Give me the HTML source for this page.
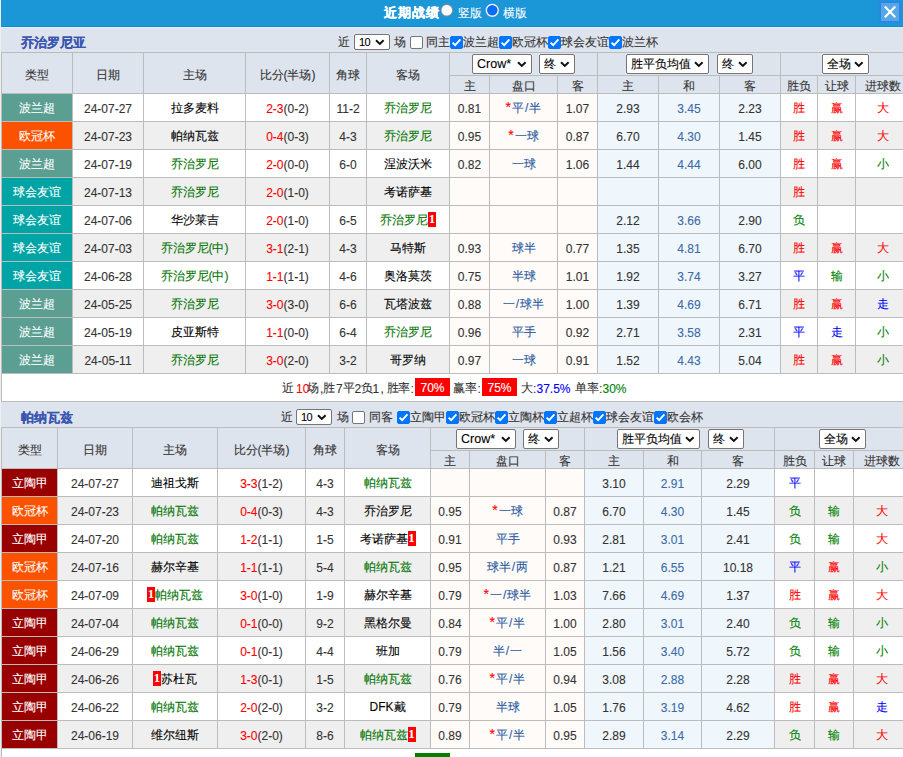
<!DOCTYPE html><html><head><meta charset="utf-8"><style>
*{margin:0;padding:0;box-sizing:border-box}
html,body{width:903px;height:757px;overflow:hidden;background:#fff}
body{position:relative;font-family:"Liberation Sans",sans-serif;font-size:12px;color:#333;-webkit-text-stroke:0.1px}
.a{position:absolute}
.c{position:absolute;display:flex;align-items:center;justify-content:center;white-space:nowrap;line-height:14px}
.h{padding-top:3px}
.n{padding-top:2px}
.hs{padding-top:3px}
.lg{color:#fff}
.tm{color:#000}
.g{color:#007400}
.hc{color:#2a5aa0}
.star{color:#f00;font-size:14px;position:relative;top:-1px;margin-right:1px}
.sl{margin:0 1px}
.dr{color:#3d6aa8}
.rc{display:inline-block;background:#f00;color:#fff;font-weight:bold;font-family:"Liberation Serif",serif;font-size:12px;width:8px;height:15px;line-height:15px;text-align:center}
.sel{position:absolute;background:#fff;border:1px solid #767676;border-radius:2px;font-size:12.5px;color:#000;display:flex;align-items:center;padding-left:4px}
.sel.zh{font-size:12px;padding-left:4px}
.sel.sm{font-size:11px;padding-left:4px;letter-spacing:-0.7px}
.sel .st{white-space:nowrap;line-height:15px}
.sel .chev{position:absolute;right:4px;top:50%;margin-top:-3px}
.cb{position:absolute;width:13px;height:13px;border:1px solid #767676;border-radius:2px;background:#fff}
.cb.on{background:#0075ff;border-color:#0075ff}
.cb svg{position:absolute;left:-1px;top:-1px}
.t{position:absolute;white-space:nowrap;line-height:14px}
.rb{position:absolute;background:#f00;color:#fff;font-size:12px;width:35px;height:18px;line-height:21px;text-align:center}
</style></head><body><div class="a" style="left:0px;top:0px;width:1px;height:757px;background:#eeeeee;"></div>
<div class="a" style="left:1px;top:0px;width:902px;height:26px;background:#1b96d6;"></div>
<div class="a" style="left:1px;top:26px;width:902px;height:1px;background:#0b8fd3;"></div>
<div class="a" style="left:1px;top:27px;width:902px;height:1px;background:#e9ebef;"></div>
<div class="a" style="left:1px;top:28px;width:902px;height:24px;background:#dee4ed;"></div>
<div class="t" style="left:384px;top:6px;font-size:13px;letter-spacing:1px;font-weight:bold;color:#fff;line-height:14px;-webkit-text-stroke:0.3px #fff">近期战绩</div>
<svg class="a" style="left:440px;top:4px" width="14" height="14" viewBox="0 0 14 14"><circle cx="6.8" cy="6.3" r="5.8" fill="#fff" stroke="#8a8a8a" stroke-width="1"/></svg>
<div class="t" style="left:458px;top:6px;color:#fff;line-height:14px">竖版</div>
<svg class="a" style="left:485px;top:3px" width="15" height="15" viewBox="0 0 15 15"><circle cx="7.3" cy="7.3" r="6.1" fill="#0a6cf5" stroke="#fff" stroke-width="1.6"/><circle cx="7.3" cy="7.3" r="6.9" fill="none" stroke="#1a80e0" stroke-width="0.6"/></svg>
<div class="t" style="left:503px;top:6px;color:#fff;line-height:14px">横版</div>
<div class="a" style="left:879px;top:1px;width:22px;height:22px;background:#2a88e2"></div>
<div class="a" style="left:881px;top:3px;width:18px;height:18px;background:#57a6ea"></div>
<svg class="a" style="left:879px;top:1px" width="22" height="22" viewBox="0 0 22 22"><path d="M5.8 5.6 L16.3 16.3 M16.3 5.6 L5.8 16.3" stroke="#fff" stroke-width="2.1"/></svg>
<div class="t" style="left:21px;top:36px;font-size:13px;font-weight:bold;color:#3a55b0;line-height:14px">乔治罗尼亚</div>
<div class="t" style="left:337.5px;top:35px">近</div>
<div class="sel sm" style="left:354px;top:34px;width:36px;height:16px"><span class="st">10</span><svg class="chev" width="10" height="7" viewBox="0 0 10 7"><path d="M1 1.3 L4.8 4.9 L8.6 1.3" fill="none" stroke="#111" stroke-width="2"/></svg></div>
<div class="t" style="left:393.5px;top:35px">场</div>
<div class="cb" style="left:410px;top:36px"></div>
<div class="t" style="left:426px;top:35px">同主</div>
<div class="cb on" style="left:450px;top:36px"><svg width="13" height="13" viewBox="0 0 13 13"><path d="M2.6 6.6 L5.2 9.2 L10.4 3.4" fill="none" stroke="#fff" stroke-width="1.9"/></svg></div>
<div class="t" style="left:463px;top:35px">波兰超</div>
<div class="cb on" style="left:499px;top:36px"><svg width="13" height="13" viewBox="0 0 13 13"><path d="M2.6 6.6 L5.2 9.2 L10.4 3.4" fill="none" stroke="#fff" stroke-width="1.9"/></svg></div>
<div class="t" style="left:512px;top:35px">欧冠杯</div>
<div class="cb on" style="left:548px;top:36px"><svg width="13" height="13" viewBox="0 0 13 13"><path d="M2.6 6.6 L5.2 9.2 L10.4 3.4" fill="none" stroke="#fff" stroke-width="1.9"/></svg></div>
<div class="t" style="left:561px;top:35px">球会友谊</div>
<div class="cb on" style="left:609px;top:36px"><svg width="13" height="13" viewBox="0 0 13 13"><path d="M2.6 6.6 L5.2 9.2 L10.4 3.4" fill="none" stroke="#fff" stroke-width="1.9"/></svg></div>
<div class="t" style="left:622px;top:35px">波兰杯</div>
<div class="a" style="left:1px;top:52px;width:909px;height:322px;background:#bcbcbc;"></div>
<div class="c h" style="left:2px;top:53px;width:70px;height:40px;background:#dee4ed;">类型</div>
<div class="c h" style="left:73px;top:53px;width:70px;height:40px;background:#dee4ed;">日期</div>
<div class="c h" style="left:144px;top:53px;width:101px;height:40px;background:#dee4ed;">主场</div>
<div class="c h" style="left:246px;top:53px;width:83px;height:40px;background:#dee4ed;">比分(半场)</div>
<div class="c h" style="left:330px;top:53px;width:36px;height:40px;background:#dee4ed;">角球</div>
<div class="c h" style="left:367px;top:53px;width:82px;height:40px;background:#dee4ed;">客场</div>
<div class="c" style="left:450px;top:53px;width:147px;height:22px;background:#dee4ed;"></div>
<div class="c" style="left:598px;top:53px;width:182px;height:22px;background:#dee4ed;"></div>
<div class="c" style="left:781px;top:53px;width:128px;height:22px;background:#dee4ed;"></div>
<div class="c hs" style="left:450px;top:76px;width:39px;height:17px;background:#dee4ed;">主</div>
<div class="c hs" style="left:490px;top:76px;width:67px;height:17px;background:#dee4ed;">盘口</div>
<div class="c hs" style="left:558px;top:76px;width:39px;height:17px;background:#dee4ed;">客</div>
<div class="c hs" style="left:598px;top:76px;width:60px;height:17px;background:#dee4ed;">主</div>
<div class="c hs" style="left:659px;top:76px;width:60px;height:17px;background:#dee4ed;">和</div>
<div class="c hs" style="left:720px;top:76px;width:60px;height:17px;background:#dee4ed;">客</div>
<div class="c hs" style="left:781px;top:76px;width:36px;height:17px;background:#dee4ed;">胜负</div>
<div class="c hs" style="left:818px;top:76px;width:37px;height:17px;background:#dee4ed;">让球</div>
<div class="c hs" style="left:856px;top:76px;width:53px;height:17px;background:#dee4ed;">进球数</div>
<div class="sel" style="left:472px;top:54px;width:60px;height:20px"><span class="st">Crow*</span><svg class="chev" width="10" height="7" viewBox="0 0 10 7"><path d="M1 1.3 L4.8 4.9 L8.6 1.3" fill="none" stroke="#111" stroke-width="2"/></svg></div>
<div class="sel zh" style="left:539px;top:54px;width:36px;height:20px"><span class="st">终</span><svg class="chev" width="10" height="7" viewBox="0 0 10 7"><path d="M1 1.3 L4.8 4.9 L8.6 1.3" fill="none" stroke="#111" stroke-width="2"/></svg></div>
<div class="sel zh" style="left:626px;top:54px;width:83px;height:20px"><span class="st">胜平负均值</span><svg class="chev" width="10" height="7" viewBox="0 0 10 7"><path d="M1 1.3 L4.8 4.9 L8.6 1.3" fill="none" stroke="#111" stroke-width="2"/></svg></div>
<div class="sel zh" style="left:717px;top:54px;width:36px;height:20px"><span class="st">终</span><svg class="chev" width="10" height="7" viewBox="0 0 10 7"><path d="M1 1.3 L4.8 4.9 L8.6 1.3" fill="none" stroke="#111" stroke-width="2"/></svg></div>
<div class="sel zh" style="left:822px;top:54px;width:47px;height:20px"><span class="st">全场</span><svg class="chev" width="10" height="7" viewBox="0 0 10 7"><path d="M1 1.3 L4.8 4.9 L8.6 1.3" fill="none" stroke="#111" stroke-width="2"/></svg></div>
<div class="c lg" style="left:2px;top:94px;width:70px;height:27px;background:#5b9f93;">波兰超</div>
<div class="c n" style="left:73px;top:94px;width:70px;height:27px;background:#ffffff;">24-07-27</div>
<div class="c tm" style="left:144px;top:94px;width:101px;height:27px;background:#ffffff;">拉多麦料</div>
<div class="c n" style="left:246px;top:94px;width:83px;height:27px;background:#ffffff;"><span style="color:#ff0000">2-3</span>(0-2)</div>
<div class="c n" style="left:330px;top:94px;width:36px;height:27px;background:#ffffff;">11-2</div>
<div class="c tm g" style="left:367px;top:94px;width:82px;height:27px;background:#ffffff;">乔治罗尼</div>
<div class="c n" style="left:450px;top:94px;width:39px;height:27px;background:#fffbf8;">0.81</div>
<div class="c hc" style="left:490px;top:94px;width:67px;height:27px;background:#fffbf8;"><span class="star">*</span>平<span class="sl">/</span>半</div>
<div class="c n" style="left:558px;top:94px;width:39px;height:27px;background:#fffbf8;">1.07</div>
<div class="c n" style="left:598px;top:94px;width:60px;height:27px;background:#f0f7fc;">2.93</div>
<div class="c n dr" style="left:659px;top:94px;width:60px;height:27px;background:#f0f7fc;">3.45</div>
<div class="c n" style="left:720px;top:94px;width:60px;height:27px;background:#f0f7fc;">2.23</div>
<div class="c" style="left:781px;top:94px;width:36px;height:27px;background:#ffffff;"><span style="color:#ff0000">胜</span></div>
<div class="c" style="left:818px;top:94px;width:37px;height:27px;background:#ffffff;"><span style="color:#ff0000">赢</span></div>
<div class="c" style="left:856px;top:94px;width:53px;height:27px;background:#ffffff;"><span style="color:#ff0000">大</span></div>
<div class="c lg" style="left:2px;top:122px;width:70px;height:27px;background:#fb5200;">欧冠杯</div>
<div class="c n" style="left:73px;top:122px;width:70px;height:27px;background:#efefef;">24-07-23</div>
<div class="c tm" style="left:144px;top:122px;width:101px;height:27px;background:#efefef;">帕纳瓦兹</div>
<div class="c n" style="left:246px;top:122px;width:83px;height:27px;background:#efefef;"><span style="color:#ff0000">0-4</span>(0-3)</div>
<div class="c n" style="left:330px;top:122px;width:36px;height:27px;background:#efefef;">4-3</div>
<div class="c tm g" style="left:367px;top:122px;width:82px;height:27px;background:#efefef;">乔治罗尼</div>
<div class="c n" style="left:450px;top:122px;width:39px;height:27px;background:#fffbf8;">0.95</div>
<div class="c hc" style="left:490px;top:122px;width:67px;height:27px;background:#fffbf8;"><span class="star">*</span>一球</div>
<div class="c n" style="left:558px;top:122px;width:39px;height:27px;background:#fffbf8;">0.87</div>
<div class="c n" style="left:598px;top:122px;width:60px;height:27px;background:#f0f7fc;">6.70</div>
<div class="c n dr" style="left:659px;top:122px;width:60px;height:27px;background:#f0f7fc;">4.30</div>
<div class="c n" style="left:720px;top:122px;width:60px;height:27px;background:#f0f7fc;">1.45</div>
<div class="c" style="left:781px;top:122px;width:36px;height:27px;background:#efefef;"><span style="color:#ff0000">胜</span></div>
<div class="c" style="left:818px;top:122px;width:37px;height:27px;background:#efefef;"><span style="color:#ff0000">赢</span></div>
<div class="c" style="left:856px;top:122px;width:53px;height:27px;background:#efefef;"><span style="color:#ff0000">大</span></div>
<div class="c lg" style="left:2px;top:150px;width:70px;height:27px;background:#5b9f93;">波兰超</div>
<div class="c n" style="left:73px;top:150px;width:70px;height:27px;background:#ffffff;">24-07-19</div>
<div class="c tm g" style="left:144px;top:150px;width:101px;height:27px;background:#ffffff;">乔治罗尼</div>
<div class="c n" style="left:246px;top:150px;width:83px;height:27px;background:#ffffff;"><span style="color:#ff0000">2-0</span>(0-0)</div>
<div class="c n" style="left:330px;top:150px;width:36px;height:27px;background:#ffffff;">6-0</div>
<div class="c tm" style="left:367px;top:150px;width:82px;height:27px;background:#ffffff;">涅波沃米</div>
<div class="c n" style="left:450px;top:150px;width:39px;height:27px;background:#fffbf8;">0.82</div>
<div class="c hc" style="left:490px;top:150px;width:67px;height:27px;background:#fffbf8;">一球</div>
<div class="c n" style="left:558px;top:150px;width:39px;height:27px;background:#fffbf8;">1.06</div>
<div class="c n" style="left:598px;top:150px;width:60px;height:27px;background:#f0f7fc;">1.44</div>
<div class="c n dr" style="left:659px;top:150px;width:60px;height:27px;background:#f0f7fc;">4.44</div>
<div class="c n" style="left:720px;top:150px;width:60px;height:27px;background:#f0f7fc;">6.00</div>
<div class="c" style="left:781px;top:150px;width:36px;height:27px;background:#ffffff;"><span style="color:#ff0000">胜</span></div>
<div class="c" style="left:818px;top:150px;width:37px;height:27px;background:#ffffff;"><span style="color:#ff0000">赢</span></div>
<div class="c" style="left:856px;top:150px;width:53px;height:27px;background:#ffffff;"><span style="color:#008000">小</span></div>
<div class="c lg" style="left:2px;top:178px;width:70px;height:27px;background:#00a4a4;">球会友谊</div>
<div class="c n" style="left:73px;top:178px;width:70px;height:27px;background:#efefef;">24-07-13</div>
<div class="c tm g" style="left:144px;top:178px;width:101px;height:27px;background:#efefef;">乔治罗尼</div>
<div class="c n" style="left:246px;top:178px;width:83px;height:27px;background:#efefef;"><span style="color:#ff0000">2-0</span>(1-0)</div>
<div class="c n" style="left:330px;top:178px;width:36px;height:27px;background:#efefef;"></div>
<div class="c tm" style="left:367px;top:178px;width:82px;height:27px;background:#efefef;">考诺萨基</div>
<div class="c n" style="left:450px;top:178px;width:39px;height:27px;background:#fffbf8;"></div>
<div class="c hc" style="left:490px;top:178px;width:67px;height:27px;background:#fffbf8;"></div>
<div class="c n" style="left:558px;top:178px;width:39px;height:27px;background:#fffbf8;"></div>
<div class="c n" style="left:598px;top:178px;width:60px;height:27px;background:#f0f7fc;"></div>
<div class="c n dr" style="left:659px;top:178px;width:60px;height:27px;background:#f0f7fc;"></div>
<div class="c n" style="left:720px;top:178px;width:60px;height:27px;background:#f0f7fc;"></div>
<div class="c" style="left:781px;top:178px;width:36px;height:27px;background:#efefef;"><span style="color:#ff0000">胜</span></div>
<div class="c" style="left:818px;top:178px;width:37px;height:27px;background:#efefef;"></div>
<div class="c" style="left:856px;top:178px;width:53px;height:27px;background:#efefef;"></div>
<div class="c lg" style="left:2px;top:206px;width:70px;height:27px;background:#00a4a4;">球会友谊</div>
<div class="c n" style="left:73px;top:206px;width:70px;height:27px;background:#ffffff;">24-07-06</div>
<div class="c tm" style="left:144px;top:206px;width:101px;height:27px;background:#ffffff;">华沙莱吉</div>
<div class="c n" style="left:246px;top:206px;width:83px;height:27px;background:#ffffff;"><span style="color:#ff0000">2-0</span>(1-0)</div>
<div class="c n" style="left:330px;top:206px;width:36px;height:27px;background:#ffffff;">6-5</div>
<div class="c tm g" style="left:367px;top:206px;width:82px;height:27px;background:#ffffff;">乔治罗尼<span class="rc">1</span></div>
<div class="c n" style="left:450px;top:206px;width:39px;height:27px;background:#fffbf8;"></div>
<div class="c hc" style="left:490px;top:206px;width:67px;height:27px;background:#fffbf8;"></div>
<div class="c n" style="left:558px;top:206px;width:39px;height:27px;background:#fffbf8;"></div>
<div class="c n" style="left:598px;top:206px;width:60px;height:27px;background:#f0f7fc;">2.12</div>
<div class="c n dr" style="left:659px;top:206px;width:60px;height:27px;background:#f0f7fc;">3.66</div>
<div class="c n" style="left:720px;top:206px;width:60px;height:27px;background:#f0f7fc;">2.90</div>
<div class="c" style="left:781px;top:206px;width:36px;height:27px;background:#ffffff;"><span style="color:#008000">负</span></div>
<div class="c" style="left:818px;top:206px;width:37px;height:27px;background:#ffffff;"></div>
<div class="c" style="left:856px;top:206px;width:53px;height:27px;background:#ffffff;"></div>
<div class="c lg" style="left:2px;top:234px;width:70px;height:27px;background:#00a4a4;">球会友谊</div>
<div class="c n" style="left:73px;top:234px;width:70px;height:27px;background:#efefef;">24-07-03</div>
<div class="c tm g" style="left:144px;top:234px;width:101px;height:27px;background:#efefef;">乔治罗尼(中)</div>
<div class="c n" style="left:246px;top:234px;width:83px;height:27px;background:#efefef;"><span style="color:#ff0000">3-1</span>(2-1)</div>
<div class="c n" style="left:330px;top:234px;width:36px;height:27px;background:#efefef;">4-3</div>
<div class="c tm" style="left:367px;top:234px;width:82px;height:27px;background:#efefef;">马特斯</div>
<div class="c n" style="left:450px;top:234px;width:39px;height:27px;background:#fffbf8;">0.93</div>
<div class="c hc" style="left:490px;top:234px;width:67px;height:27px;background:#fffbf8;">球半</div>
<div class="c n" style="left:558px;top:234px;width:39px;height:27px;background:#fffbf8;">0.77</div>
<div class="c n" style="left:598px;top:234px;width:60px;height:27px;background:#f0f7fc;">1.35</div>
<div class="c n dr" style="left:659px;top:234px;width:60px;height:27px;background:#f0f7fc;">4.81</div>
<div class="c n" style="left:720px;top:234px;width:60px;height:27px;background:#f0f7fc;">6.70</div>
<div class="c" style="left:781px;top:234px;width:36px;height:27px;background:#efefef;"><span style="color:#ff0000">胜</span></div>
<div class="c" style="left:818px;top:234px;width:37px;height:27px;background:#efefef;"><span style="color:#ff0000">赢</span></div>
<div class="c" style="left:856px;top:234px;width:53px;height:27px;background:#efefef;"><span style="color:#ff0000">大</span></div>
<div class="c lg" style="left:2px;top:262px;width:70px;height:27px;background:#00a4a4;">球会友谊</div>
<div class="c n" style="left:73px;top:262px;width:70px;height:27px;background:#ffffff;">24-06-28</div>
<div class="c tm g" style="left:144px;top:262px;width:101px;height:27px;background:#ffffff;">乔治罗尼(中)</div>
<div class="c n" style="left:246px;top:262px;width:83px;height:27px;background:#ffffff;"><span style="color:#ff0000">1-1</span>(1-1)</div>
<div class="c n" style="left:330px;top:262px;width:36px;height:27px;background:#ffffff;">4-6</div>
<div class="c tm" style="left:367px;top:262px;width:82px;height:27px;background:#ffffff;">奥洛莫茨</div>
<div class="c n" style="left:450px;top:262px;width:39px;height:27px;background:#fffbf8;">0.75</div>
<div class="c hc" style="left:490px;top:262px;width:67px;height:27px;background:#fffbf8;">半球</div>
<div class="c n" style="left:558px;top:262px;width:39px;height:27px;background:#fffbf8;">1.01</div>
<div class="c n" style="left:598px;top:262px;width:60px;height:27px;background:#f0f7fc;">1.92</div>
<div class="c n dr" style="left:659px;top:262px;width:60px;height:27px;background:#f0f7fc;">3.74</div>
<div class="c n" style="left:720px;top:262px;width:60px;height:27px;background:#f0f7fc;">3.27</div>
<div class="c" style="left:781px;top:262px;width:36px;height:27px;background:#ffffff;"><span style="color:#0000ff">平</span></div>
<div class="c" style="left:818px;top:262px;width:37px;height:27px;background:#ffffff;"><span style="color:#008000">输</span></div>
<div class="c" style="left:856px;top:262px;width:53px;height:27px;background:#ffffff;"><span style="color:#008000">小</span></div>
<div class="c lg" style="left:2px;top:290px;width:70px;height:27px;background:#5b9f93;">波兰超</div>
<div class="c n" style="left:73px;top:290px;width:70px;height:27px;background:#efefef;">24-05-25</div>
<div class="c tm g" style="left:144px;top:290px;width:101px;height:27px;background:#efefef;">乔治罗尼</div>
<div class="c n" style="left:246px;top:290px;width:83px;height:27px;background:#efefef;"><span style="color:#ff0000">3-0</span>(3-0)</div>
<div class="c n" style="left:330px;top:290px;width:36px;height:27px;background:#efefef;">6-6</div>
<div class="c tm" style="left:367px;top:290px;width:82px;height:27px;background:#efefef;">瓦塔波兹</div>
<div class="c n" style="left:450px;top:290px;width:39px;height:27px;background:#fffbf8;">0.88</div>
<div class="c hc" style="left:490px;top:290px;width:67px;height:27px;background:#fffbf8;">一<span class="sl">/</span>球半</div>
<div class="c n" style="left:558px;top:290px;width:39px;height:27px;background:#fffbf8;">1.00</div>
<div class="c n" style="left:598px;top:290px;width:60px;height:27px;background:#f0f7fc;">1.39</div>
<div class="c n dr" style="left:659px;top:290px;width:60px;height:27px;background:#f0f7fc;">4.69</div>
<div class="c n" style="left:720px;top:290px;width:60px;height:27px;background:#f0f7fc;">6.71</div>
<div class="c" style="left:781px;top:290px;width:36px;height:27px;background:#efefef;"><span style="color:#ff0000">胜</span></div>
<div class="c" style="left:818px;top:290px;width:37px;height:27px;background:#efefef;"><span style="color:#ff0000">赢</span></div>
<div class="c" style="left:856px;top:290px;width:53px;height:27px;background:#efefef;"><span style="color:#0000ff">走</span></div>
<div class="c lg" style="left:2px;top:318px;width:70px;height:27px;background:#5b9f93;">波兰超</div>
<div class="c n" style="left:73px;top:318px;width:70px;height:27px;background:#ffffff;">24-05-19</div>
<div class="c tm" style="left:144px;top:318px;width:101px;height:27px;background:#ffffff;">皮亚斯特</div>
<div class="c n" style="left:246px;top:318px;width:83px;height:27px;background:#ffffff;"><span style="color:#ff0000">1-1</span>(0-0)</div>
<div class="c n" style="left:330px;top:318px;width:36px;height:27px;background:#ffffff;">6-4</div>
<div class="c tm g" style="left:367px;top:318px;width:82px;height:27px;background:#ffffff;">乔治罗尼</div>
<div class="c n" style="left:450px;top:318px;width:39px;height:27px;background:#fffbf8;">0.96</div>
<div class="c hc" style="left:490px;top:318px;width:67px;height:27px;background:#fffbf8;">平手</div>
<div class="c n" style="left:558px;top:318px;width:39px;height:27px;background:#fffbf8;">0.92</div>
<div class="c n" style="left:598px;top:318px;width:60px;height:27px;background:#f0f7fc;">2.71</div>
<div class="c n dr" style="left:659px;top:318px;width:60px;height:27px;background:#f0f7fc;">3.58</div>
<div class="c n" style="left:720px;top:318px;width:60px;height:27px;background:#f0f7fc;">2.31</div>
<div class="c" style="left:781px;top:318px;width:36px;height:27px;background:#ffffff;"><span style="color:#0000ff">平</span></div>
<div class="c" style="left:818px;top:318px;width:37px;height:27px;background:#ffffff;"><span style="color:#0000ff">走</span></div>
<div class="c" style="left:856px;top:318px;width:53px;height:27px;background:#ffffff;"><span style="color:#008000">小</span></div>
<div class="c lg" style="left:2px;top:346px;width:70px;height:27px;background:#5b9f93;">波兰超</div>
<div class="c n" style="left:73px;top:346px;width:70px;height:27px;background:#efefef;">24-05-11</div>
<div class="c tm g" style="left:144px;top:346px;width:101px;height:27px;background:#efefef;">乔治罗尼</div>
<div class="c n" style="left:246px;top:346px;width:83px;height:27px;background:#efefef;"><span style="color:#ff0000">3-0</span>(2-0)</div>
<div class="c n" style="left:330px;top:346px;width:36px;height:27px;background:#efefef;">3-2</div>
<div class="c tm" style="left:367px;top:346px;width:82px;height:27px;background:#efefef;">哥罗纳</div>
<div class="c n" style="left:450px;top:346px;width:39px;height:27px;background:#fffbf8;">0.97</div>
<div class="c hc" style="left:490px;top:346px;width:67px;height:27px;background:#fffbf8;">一球</div>
<div class="c n" style="left:558px;top:346px;width:39px;height:27px;background:#fffbf8;">0.91</div>
<div class="c n" style="left:598px;top:346px;width:60px;height:27px;background:#f0f7fc;">1.52</div>
<div class="c n dr" style="left:659px;top:346px;width:60px;height:27px;background:#f0f7fc;">4.43</div>
<div class="c n" style="left:720px;top:346px;width:60px;height:27px;background:#f0f7fc;">5.04</div>
<div class="c" style="left:781px;top:346px;width:36px;height:27px;background:#efefef;"><span style="color:#ff0000">胜</span></div>
<div class="c" style="left:818px;top:346px;width:37px;height:27px;background:#efefef;"><span style="color:#ff0000">赢</span></div>
<div class="c" style="left:856px;top:346px;width:53px;height:27px;background:#efefef;"><span style="color:#008000">小</span></div>
<div class="a" style="left:1px;top:373px;width:908px;height:29px;background:#bcbcbc;"></div>
<div class="a" style="left:2px;top:374px;width:906px;height:27px;background:#fff;"></div>
<div class="t" style="left:282px;top:381px;color:#333">近</div>
<div class="t" style="left:296px;top:382px;color:#ff0000">10</div>
<div class="t" style="left:307px;top:381px;color:#333">场</div>
<div class="t" style="left:320px;top:382px;color:#333">,</div>
<div class="t" style="left:323px;top:381px;color:#333">胜</div>
<div class="t" style="left:336px;top:382px;color:#333">7</div>
<div class="t" style="left:342.5px;top:381px;color:#333">平</div>
<div class="t" style="left:354.5px;top:382px;color:#333">2</div>
<div class="t" style="left:361px;top:381px;color:#333">负</div>
<div class="t" style="left:372.5px;top:382px;color:#333">1</div>
<div class="t" style="left:380.5px;top:382px;color:#333">,</div>
<div class="t" style="left:386.5px;top:381px;color:#333">胜</div>
<div class="t" style="left:398px;top:381px;color:#333">率</div>
<div class="t" style="left:410.5px;top:382px;color:#333">:</div>
<div class="t" style="left:453px;top:381px;color:#333">赢</div>
<div class="t" style="left:465px;top:381px;color:#333">率</div>
<div class="t" style="left:477.5px;top:382px;color:#333">:</div>
<div class="t" style="left:520.5px;top:381px;color:#333">大</div>
<div class="t" style="left:533px;top:382px;color:#333">:</div>
<div class="t" style="left:536.5px;top:382px;color:#0000ff">37.5%</div>
<div class="t" style="left:574.5px;top:381px;color:#333">单</div>
<div class="t" style="left:586.5px;top:381px;color:#333">率</div>
<div class="t" style="left:599px;top:382px;color:#333">:</div>
<div class="t" style="left:602.5px;top:382px;color:#008000">30%</div>
<div class="rb" style="left:415px;top:378px">70%</div>
<div class="rb" style="left:482px;top:378px">75%</div>
<div class="a" style="left:1px;top:402px;width:902px;height:25px;background:#dee4ed;"></div>
<div class="t" style="left:21px;top:411px;font-size:13px;font-weight:bold;color:#3a55b0;line-height:14px">帕纳瓦兹</div>
<div class="t" style="left:280.5px;top:410px">近</div>
<div class="sel sm" style="left:296px;top:409px;width:36px;height:16px"><span class="st">10</span><svg class="chev" width="10" height="7" viewBox="0 0 10 7"><path d="M1 1.3 L4.8 4.9 L8.6 1.3" fill="none" stroke="#111" stroke-width="2"/></svg></div>
<div class="t" style="left:336.5px;top:410px">场</div>
<div class="cb" style="left:352px;top:411px"></div>
<div class="t" style="left:369px;top:410px">同客</div>
<div class="cb on" style="left:397px;top:411px"><svg width="13" height="13" viewBox="0 0 13 13"><path d="M2.6 6.6 L5.2 9.2 L10.4 3.4" fill="none" stroke="#fff" stroke-width="1.9"/></svg></div>
<div class="t" style="left:410px;top:410px">立陶甲</div>
<div class="cb on" style="left:446px;top:411px"><svg width="13" height="13" viewBox="0 0 13 13"><path d="M2.6 6.6 L5.2 9.2 L10.4 3.4" fill="none" stroke="#fff" stroke-width="1.9"/></svg></div>
<div class="t" style="left:459px;top:410px">欧冠杯</div>
<div class="cb on" style="left:495px;top:411px"><svg width="13" height="13" viewBox="0 0 13 13"><path d="M2.6 6.6 L5.2 9.2 L10.4 3.4" fill="none" stroke="#fff" stroke-width="1.9"/></svg></div>
<div class="t" style="left:508px;top:410px">立陶杯</div>
<div class="cb on" style="left:544px;top:411px"><svg width="13" height="13" viewBox="0 0 13 13"><path d="M2.6 6.6 L5.2 9.2 L10.4 3.4" fill="none" stroke="#fff" stroke-width="1.9"/></svg></div>
<div class="t" style="left:557px;top:410px">立超杯</div>
<div class="cb on" style="left:593px;top:411px"><svg width="13" height="13" viewBox="0 0 13 13"><path d="M2.6 6.6 L5.2 9.2 L10.4 3.4" fill="none" stroke="#fff" stroke-width="1.9"/></svg></div>
<div class="t" style="left:606px;top:410px">球会友谊</div>
<div class="cb on" style="left:654px;top:411px"><svg width="13" height="13" viewBox="0 0 13 13"><path d="M2.6 6.6 L5.2 9.2 L10.4 3.4" fill="none" stroke="#fff" stroke-width="1.9"/></svg></div>
<div class="t" style="left:667px;top:410px">欧会杯</div>
<div class="a" style="left:1px;top:427px;width:909px;height:322px;background:#bcbcbc;"></div>
<div class="c h" style="left:2px;top:428px;width:55px;height:40px;background:#dee4ed;">类型</div>
<div class="c h" style="left:58px;top:428px;width:74px;height:40px;background:#dee4ed;">日期</div>
<div class="c h" style="left:133px;top:428px;width:84px;height:40px;background:#dee4ed;">主场</div>
<div class="c h" style="left:218px;top:428px;width:87px;height:40px;background:#dee4ed;">比分(半场)</div>
<div class="c h" style="left:306px;top:428px;width:38px;height:40px;background:#dee4ed;">角球</div>
<div class="c h" style="left:345px;top:428px;width:85px;height:40px;background:#dee4ed;">客场</div>
<div class="c" style="left:431px;top:428px;width:153px;height:22px;background:#dee4ed;"></div>
<div class="c" style="left:585px;top:428px;width:189px;height:22px;background:#dee4ed;"></div>
<div class="c" style="left:775px;top:428px;width:134px;height:22px;background:#dee4ed;"></div>
<div class="c hs" style="left:431px;top:451px;width:38px;height:17px;background:#dee4ed;">主</div>
<div class="c hs" style="left:470px;top:451px;width:75px;height:17px;background:#dee4ed;">盘口</div>
<div class="c hs" style="left:546px;top:451px;width:38px;height:17px;background:#dee4ed;">客</div>
<div class="c hs" style="left:585px;top:451px;width:58px;height:17px;background:#dee4ed;">主</div>
<div class="c hs" style="left:644px;top:451px;width:57px;height:17px;background:#dee4ed;">和</div>
<div class="c hs" style="left:702px;top:451px;width:72px;height:17px;background:#dee4ed;">客</div>
<div class="c hs" style="left:775px;top:451px;width:39px;height:17px;background:#dee4ed;">胜负</div>
<div class="c hs" style="left:815px;top:451px;width:38px;height:17px;background:#dee4ed;">让球</div>
<div class="c hs" style="left:854px;top:451px;width:55px;height:17px;background:#dee4ed;">进球数</div>
<div class="sel" style="left:456px;top:429px;width:60px;height:20px"><span class="st">Crow*</span><svg class="chev" width="10" height="7" viewBox="0 0 10 7"><path d="M1 1.3 L4.8 4.9 L8.6 1.3" fill="none" stroke="#111" stroke-width="2"/></svg></div>
<div class="sel zh" style="left:523px;top:429px;width:36px;height:20px"><span class="st">终</span><svg class="chev" width="10" height="7" viewBox="0 0 10 7"><path d="M1 1.3 L4.8 4.9 L8.6 1.3" fill="none" stroke="#111" stroke-width="2"/></svg></div>
<div class="sel zh" style="left:617px;top:429px;width:83px;height:20px"><span class="st">胜平负均值</span><svg class="chev" width="10" height="7" viewBox="0 0 10 7"><path d="M1 1.3 L4.8 4.9 L8.6 1.3" fill="none" stroke="#111" stroke-width="2"/></svg></div>
<div class="sel zh" style="left:708px;top:429px;width:36px;height:20px"><span class="st">终</span><svg class="chev" width="10" height="7" viewBox="0 0 10 7"><path d="M1 1.3 L4.8 4.9 L8.6 1.3" fill="none" stroke="#111" stroke-width="2"/></svg></div>
<div class="sel zh" style="left:819px;top:429px;width:47px;height:20px"><span class="st">全场</span><svg class="chev" width="10" height="7" viewBox="0 0 10 7"><path d="M1 1.3 L4.8 4.9 L8.6 1.3" fill="none" stroke="#111" stroke-width="2"/></svg></div>
<div class="c lg" style="left:2px;top:469px;width:55px;height:27px;background:#990000;">立陶甲</div>
<div class="c n" style="left:58px;top:469px;width:74px;height:27px;background:#ffffff;">24-07-27</div>
<div class="c tm" style="left:133px;top:469px;width:84px;height:27px;background:#ffffff;">迪祖戈斯</div>
<div class="c n" style="left:218px;top:469px;width:87px;height:27px;background:#ffffff;"><span style="color:#ff0000">3-3</span>(1-2)</div>
<div class="c n" style="left:306px;top:469px;width:38px;height:27px;background:#ffffff;">4-3</div>
<div class="c tm g" style="left:345px;top:469px;width:85px;height:27px;background:#ffffff;">帕纳瓦兹</div>
<div class="c n" style="left:431px;top:469px;width:38px;height:27px;background:#fffbf8;"></div>
<div class="c hc" style="left:470px;top:469px;width:75px;height:27px;background:#fffbf8;"></div>
<div class="c n" style="left:546px;top:469px;width:38px;height:27px;background:#fffbf8;"></div>
<div class="c n" style="left:585px;top:469px;width:58px;height:27px;background:#f0f7fc;">3.10</div>
<div class="c n dr" style="left:644px;top:469px;width:57px;height:27px;background:#f0f7fc;">2.91</div>
<div class="c n" style="left:702px;top:469px;width:72px;height:27px;background:#f0f7fc;">2.29</div>
<div class="c" style="left:775px;top:469px;width:39px;height:27px;background:#ffffff;"><span style="color:#0000ff">平</span></div>
<div class="c" style="left:815px;top:469px;width:38px;height:27px;background:#ffffff;"></div>
<div class="c" style="left:854px;top:469px;width:55px;height:27px;background:#ffffff;"></div>
<div class="c lg" style="left:2px;top:497px;width:55px;height:27px;background:#fb5200;">欧冠杯</div>
<div class="c n" style="left:58px;top:497px;width:74px;height:27px;background:#efefef;">24-07-23</div>
<div class="c tm g" style="left:133px;top:497px;width:84px;height:27px;background:#efefef;">帕纳瓦兹</div>
<div class="c n" style="left:218px;top:497px;width:87px;height:27px;background:#efefef;"><span style="color:#ff0000">0-4</span>(0-3)</div>
<div class="c n" style="left:306px;top:497px;width:38px;height:27px;background:#efefef;">4-3</div>
<div class="c tm" style="left:345px;top:497px;width:85px;height:27px;background:#efefef;">乔治罗尼</div>
<div class="c n" style="left:431px;top:497px;width:38px;height:27px;background:#fffbf8;">0.95</div>
<div class="c hc" style="left:470px;top:497px;width:75px;height:27px;background:#fffbf8;"><span class="star">*</span>一球</div>
<div class="c n" style="left:546px;top:497px;width:38px;height:27px;background:#fffbf8;">0.87</div>
<div class="c n" style="left:585px;top:497px;width:58px;height:27px;background:#f0f7fc;">6.70</div>
<div class="c n dr" style="left:644px;top:497px;width:57px;height:27px;background:#f0f7fc;">4.30</div>
<div class="c n" style="left:702px;top:497px;width:72px;height:27px;background:#f0f7fc;">1.45</div>
<div class="c" style="left:775px;top:497px;width:39px;height:27px;background:#efefef;"><span style="color:#008000">负</span></div>
<div class="c" style="left:815px;top:497px;width:38px;height:27px;background:#efefef;"><span style="color:#008000">输</span></div>
<div class="c" style="left:854px;top:497px;width:55px;height:27px;background:#efefef;"><span style="color:#ff0000">大</span></div>
<div class="c lg" style="left:2px;top:525px;width:55px;height:27px;background:#990000;">立陶甲</div>
<div class="c n" style="left:58px;top:525px;width:74px;height:27px;background:#ffffff;">24-07-20</div>
<div class="c tm g" style="left:133px;top:525px;width:84px;height:27px;background:#ffffff;">帕纳瓦兹</div>
<div class="c n" style="left:218px;top:525px;width:87px;height:27px;background:#ffffff;"><span style="color:#ff0000">1-2</span>(1-1)</div>
<div class="c n" style="left:306px;top:525px;width:38px;height:27px;background:#ffffff;">1-5</div>
<div class="c tm" style="left:345px;top:525px;width:85px;height:27px;background:#ffffff;">考诺萨基<span class="rc">1</span></div>
<div class="c n" style="left:431px;top:525px;width:38px;height:27px;background:#fffbf8;">0.91</div>
<div class="c hc" style="left:470px;top:525px;width:75px;height:27px;background:#fffbf8;">平手</div>
<div class="c n" style="left:546px;top:525px;width:38px;height:27px;background:#fffbf8;">0.93</div>
<div class="c n" style="left:585px;top:525px;width:58px;height:27px;background:#f0f7fc;">2.81</div>
<div class="c n dr" style="left:644px;top:525px;width:57px;height:27px;background:#f0f7fc;">3.01</div>
<div class="c n" style="left:702px;top:525px;width:72px;height:27px;background:#f0f7fc;">2.41</div>
<div class="c" style="left:775px;top:525px;width:39px;height:27px;background:#ffffff;"><span style="color:#008000">负</span></div>
<div class="c" style="left:815px;top:525px;width:38px;height:27px;background:#ffffff;"><span style="color:#008000">输</span></div>
<div class="c" style="left:854px;top:525px;width:55px;height:27px;background:#ffffff;"><span style="color:#ff0000">大</span></div>
<div class="c lg" style="left:2px;top:553px;width:55px;height:27px;background:#fb5200;">欧冠杯</div>
<div class="c n" style="left:58px;top:553px;width:74px;height:27px;background:#efefef;">24-07-16</div>
<div class="c tm" style="left:133px;top:553px;width:84px;height:27px;background:#efefef;">赫尔辛基</div>
<div class="c n" style="left:218px;top:553px;width:87px;height:27px;background:#efefef;"><span style="color:#ff0000">1-1</span>(1-1)</div>
<div class="c n" style="left:306px;top:553px;width:38px;height:27px;background:#efefef;">5-4</div>
<div class="c tm g" style="left:345px;top:553px;width:85px;height:27px;background:#efefef;">帕纳瓦兹</div>
<div class="c n" style="left:431px;top:553px;width:38px;height:27px;background:#fffbf8;">0.95</div>
<div class="c hc" style="left:470px;top:553px;width:75px;height:27px;background:#fffbf8;">球半<span class="sl">/</span>两</div>
<div class="c n" style="left:546px;top:553px;width:38px;height:27px;background:#fffbf8;">0.87</div>
<div class="c n" style="left:585px;top:553px;width:58px;height:27px;background:#f0f7fc;">1.21</div>
<div class="c n dr" style="left:644px;top:553px;width:57px;height:27px;background:#f0f7fc;">6.55</div>
<div class="c n" style="left:702px;top:553px;width:72px;height:27px;background:#f0f7fc;">10.18</div>
<div class="c" style="left:775px;top:553px;width:39px;height:27px;background:#efefef;"><span style="color:#0000ff">平</span></div>
<div class="c" style="left:815px;top:553px;width:38px;height:27px;background:#efefef;"><span style="color:#ff0000">赢</span></div>
<div class="c" style="left:854px;top:553px;width:55px;height:27px;background:#efefef;"><span style="color:#008000">小</span></div>
<div class="c lg" style="left:2px;top:581px;width:55px;height:27px;background:#fb5200;">欧冠杯</div>
<div class="c n" style="left:58px;top:581px;width:74px;height:27px;background:#ffffff;">24-07-09</div>
<div class="c tm g" style="left:133px;top:581px;width:84px;height:27px;background:#ffffff;"><span class="rc">1</span>帕纳瓦兹</div>
<div class="c n" style="left:218px;top:581px;width:87px;height:27px;background:#ffffff;"><span style="color:#ff0000">3-0</span>(1-0)</div>
<div class="c n" style="left:306px;top:581px;width:38px;height:27px;background:#ffffff;">1-9</div>
<div class="c tm" style="left:345px;top:581px;width:85px;height:27px;background:#ffffff;">赫尔辛基</div>
<div class="c n" style="left:431px;top:581px;width:38px;height:27px;background:#fffbf8;">0.79</div>
<div class="c hc" style="left:470px;top:581px;width:75px;height:27px;background:#fffbf8;"><span class="star">*</span>一<span class="sl">/</span>球半</div>
<div class="c n" style="left:546px;top:581px;width:38px;height:27px;background:#fffbf8;">1.03</div>
<div class="c n" style="left:585px;top:581px;width:58px;height:27px;background:#f0f7fc;">7.66</div>
<div class="c n dr" style="left:644px;top:581px;width:57px;height:27px;background:#f0f7fc;">4.69</div>
<div class="c n" style="left:702px;top:581px;width:72px;height:27px;background:#f0f7fc;">1.37</div>
<div class="c" style="left:775px;top:581px;width:39px;height:27px;background:#ffffff;"><span style="color:#ff0000">胜</span></div>
<div class="c" style="left:815px;top:581px;width:38px;height:27px;background:#ffffff;"><span style="color:#ff0000">赢</span></div>
<div class="c" style="left:854px;top:581px;width:55px;height:27px;background:#ffffff;"><span style="color:#ff0000">大</span></div>
<div class="c lg" style="left:2px;top:609px;width:55px;height:27px;background:#990000;">立陶甲</div>
<div class="c n" style="left:58px;top:609px;width:74px;height:27px;background:#efefef;">24-07-04</div>
<div class="c tm g" style="left:133px;top:609px;width:84px;height:27px;background:#efefef;">帕纳瓦兹</div>
<div class="c n" style="left:218px;top:609px;width:87px;height:27px;background:#efefef;"><span style="color:#ff0000">0-1</span>(0-0)</div>
<div class="c n" style="left:306px;top:609px;width:38px;height:27px;background:#efefef;">9-2</div>
<div class="c tm" style="left:345px;top:609px;width:85px;height:27px;background:#efefef;">黑格尔曼</div>
<div class="c n" style="left:431px;top:609px;width:38px;height:27px;background:#fffbf8;">0.84</div>
<div class="c hc" style="left:470px;top:609px;width:75px;height:27px;background:#fffbf8;"><span class="star">*</span>平<span class="sl">/</span>半</div>
<div class="c n" style="left:546px;top:609px;width:38px;height:27px;background:#fffbf8;">1.00</div>
<div class="c n" style="left:585px;top:609px;width:58px;height:27px;background:#f0f7fc;">2.80</div>
<div class="c n dr" style="left:644px;top:609px;width:57px;height:27px;background:#f0f7fc;">3.01</div>
<div class="c n" style="left:702px;top:609px;width:72px;height:27px;background:#f0f7fc;">2.40</div>
<div class="c" style="left:775px;top:609px;width:39px;height:27px;background:#efefef;"><span style="color:#008000">负</span></div>
<div class="c" style="left:815px;top:609px;width:38px;height:27px;background:#efefef;"><span style="color:#008000">输</span></div>
<div class="c" style="left:854px;top:609px;width:55px;height:27px;background:#efefef;"><span style="color:#008000">小</span></div>
<div class="c lg" style="left:2px;top:637px;width:55px;height:27px;background:#990000;">立陶甲</div>
<div class="c n" style="left:58px;top:637px;width:74px;height:27px;background:#ffffff;">24-06-29</div>
<div class="c tm g" style="left:133px;top:637px;width:84px;height:27px;background:#ffffff;">帕纳瓦兹</div>
<div class="c n" style="left:218px;top:637px;width:87px;height:27px;background:#ffffff;"><span style="color:#ff0000">0-1</span>(0-1)</div>
<div class="c n" style="left:306px;top:637px;width:38px;height:27px;background:#ffffff;">4-4</div>
<div class="c tm" style="left:345px;top:637px;width:85px;height:27px;background:#ffffff;">班加</div>
<div class="c n" style="left:431px;top:637px;width:38px;height:27px;background:#fffbf8;">0.79</div>
<div class="c hc" style="left:470px;top:637px;width:75px;height:27px;background:#fffbf8;">半<span class="sl">/</span>一</div>
<div class="c n" style="left:546px;top:637px;width:38px;height:27px;background:#fffbf8;">1.05</div>
<div class="c n" style="left:585px;top:637px;width:58px;height:27px;background:#f0f7fc;">1.56</div>
<div class="c n dr" style="left:644px;top:637px;width:57px;height:27px;background:#f0f7fc;">3.40</div>
<div class="c n" style="left:702px;top:637px;width:72px;height:27px;background:#f0f7fc;">5.72</div>
<div class="c" style="left:775px;top:637px;width:39px;height:27px;background:#ffffff;"><span style="color:#008000">负</span></div>
<div class="c" style="left:815px;top:637px;width:38px;height:27px;background:#ffffff;"><span style="color:#008000">输</span></div>
<div class="c" style="left:854px;top:637px;width:55px;height:27px;background:#ffffff;"><span style="color:#008000">小</span></div>
<div class="c lg" style="left:2px;top:665px;width:55px;height:27px;background:#990000;">立陶甲</div>
<div class="c n" style="left:58px;top:665px;width:74px;height:27px;background:#efefef;">24-06-26</div>
<div class="c tm" style="left:133px;top:665px;width:84px;height:27px;background:#efefef;"><span class="rc">1</span>苏杜瓦</div>
<div class="c n" style="left:218px;top:665px;width:87px;height:27px;background:#efefef;"><span style="color:#ff0000">1-3</span>(0-1)</div>
<div class="c n" style="left:306px;top:665px;width:38px;height:27px;background:#efefef;">1-5</div>
<div class="c tm g" style="left:345px;top:665px;width:85px;height:27px;background:#efefef;">帕纳瓦兹</div>
<div class="c n" style="left:431px;top:665px;width:38px;height:27px;background:#fffbf8;">0.76</div>
<div class="c hc" style="left:470px;top:665px;width:75px;height:27px;background:#fffbf8;"><span class="star">*</span>平<span class="sl">/</span>半</div>
<div class="c n" style="left:546px;top:665px;width:38px;height:27px;background:#fffbf8;">0.94</div>
<div class="c n" style="left:585px;top:665px;width:58px;height:27px;background:#f0f7fc;">3.08</div>
<div class="c n dr" style="left:644px;top:665px;width:57px;height:27px;background:#f0f7fc;">2.88</div>
<div class="c n" style="left:702px;top:665px;width:72px;height:27px;background:#f0f7fc;">2.28</div>
<div class="c" style="left:775px;top:665px;width:39px;height:27px;background:#efefef;"><span style="color:#ff0000">胜</span></div>
<div class="c" style="left:815px;top:665px;width:38px;height:27px;background:#efefef;"><span style="color:#ff0000">赢</span></div>
<div class="c" style="left:854px;top:665px;width:55px;height:27px;background:#efefef;"><span style="color:#ff0000">大</span></div>
<div class="c lg" style="left:2px;top:693px;width:55px;height:27px;background:#990000;">立陶甲</div>
<div class="c n" style="left:58px;top:693px;width:74px;height:27px;background:#ffffff;">24-06-22</div>
<div class="c tm g" style="left:133px;top:693px;width:84px;height:27px;background:#ffffff;">帕纳瓦兹</div>
<div class="c n" style="left:218px;top:693px;width:87px;height:27px;background:#ffffff;"><span style="color:#ff0000">2-0</span>(2-0)</div>
<div class="c n" style="left:306px;top:693px;width:38px;height:27px;background:#ffffff;">3-2</div>
<div class="c tm" style="left:345px;top:693px;width:85px;height:27px;background:#ffffff;">DFK戴</div>
<div class="c n" style="left:431px;top:693px;width:38px;height:27px;background:#fffbf8;">0.79</div>
<div class="c hc" style="left:470px;top:693px;width:75px;height:27px;background:#fffbf8;">半球</div>
<div class="c n" style="left:546px;top:693px;width:38px;height:27px;background:#fffbf8;">1.05</div>
<div class="c n" style="left:585px;top:693px;width:58px;height:27px;background:#f0f7fc;">1.76</div>
<div class="c n dr" style="left:644px;top:693px;width:57px;height:27px;background:#f0f7fc;">3.19</div>
<div class="c n" style="left:702px;top:693px;width:72px;height:27px;background:#f0f7fc;">4.62</div>
<div class="c" style="left:775px;top:693px;width:39px;height:27px;background:#ffffff;"><span style="color:#ff0000">胜</span></div>
<div class="c" style="left:815px;top:693px;width:38px;height:27px;background:#ffffff;"><span style="color:#ff0000">赢</span></div>
<div class="c" style="left:854px;top:693px;width:55px;height:27px;background:#ffffff;"><span style="color:#0000ff">走</span></div>
<div class="c lg" style="left:2px;top:721px;width:55px;height:27px;background:#990000;">立陶甲</div>
<div class="c n" style="left:58px;top:721px;width:74px;height:27px;background:#efefef;">24-06-19</div>
<div class="c tm" style="left:133px;top:721px;width:84px;height:27px;background:#efefef;">维尔纽斯</div>
<div class="c n" style="left:218px;top:721px;width:87px;height:27px;background:#efefef;"><span style="color:#ff0000">3-0</span>(2-0)</div>
<div class="c n" style="left:306px;top:721px;width:38px;height:27px;background:#efefef;">8-6</div>
<div class="c tm g" style="left:345px;top:721px;width:85px;height:27px;background:#efefef;">帕纳瓦兹<span class="rc">1</span></div>
<div class="c n" style="left:431px;top:721px;width:38px;height:27px;background:#fffbf8;">0.89</div>
<div class="c hc" style="left:470px;top:721px;width:75px;height:27px;background:#fffbf8;"><span class="star">*</span>平<span class="sl">/</span>半</div>
<div class="c n" style="left:546px;top:721px;width:38px;height:27px;background:#fffbf8;">0.95</div>
<div class="c n" style="left:585px;top:721px;width:58px;height:27px;background:#f0f7fc;">2.89</div>
<div class="c n dr" style="left:644px;top:721px;width:57px;height:27px;background:#f0f7fc;">3.14</div>
<div class="c n" style="left:702px;top:721px;width:72px;height:27px;background:#f0f7fc;">2.29</div>
<div class="c" style="left:775px;top:721px;width:39px;height:27px;background:#efefef;"><span style="color:#008000">负</span></div>
<div class="c" style="left:815px;top:721px;width:38px;height:27px;background:#efefef;"><span style="color:#008000">输</span></div>
<div class="c" style="left:854px;top:721px;width:55px;height:27px;background:#efefef;"><span style="color:#ff0000">大</span></div>
<div class="a" style="left:1px;top:749px;width:1px;height:9px;background:#bcbcbc;"></div>
<div class="a" style="left:415px;top:753px;width:35px;height:4px;background:#008000;"></div></body></html>
